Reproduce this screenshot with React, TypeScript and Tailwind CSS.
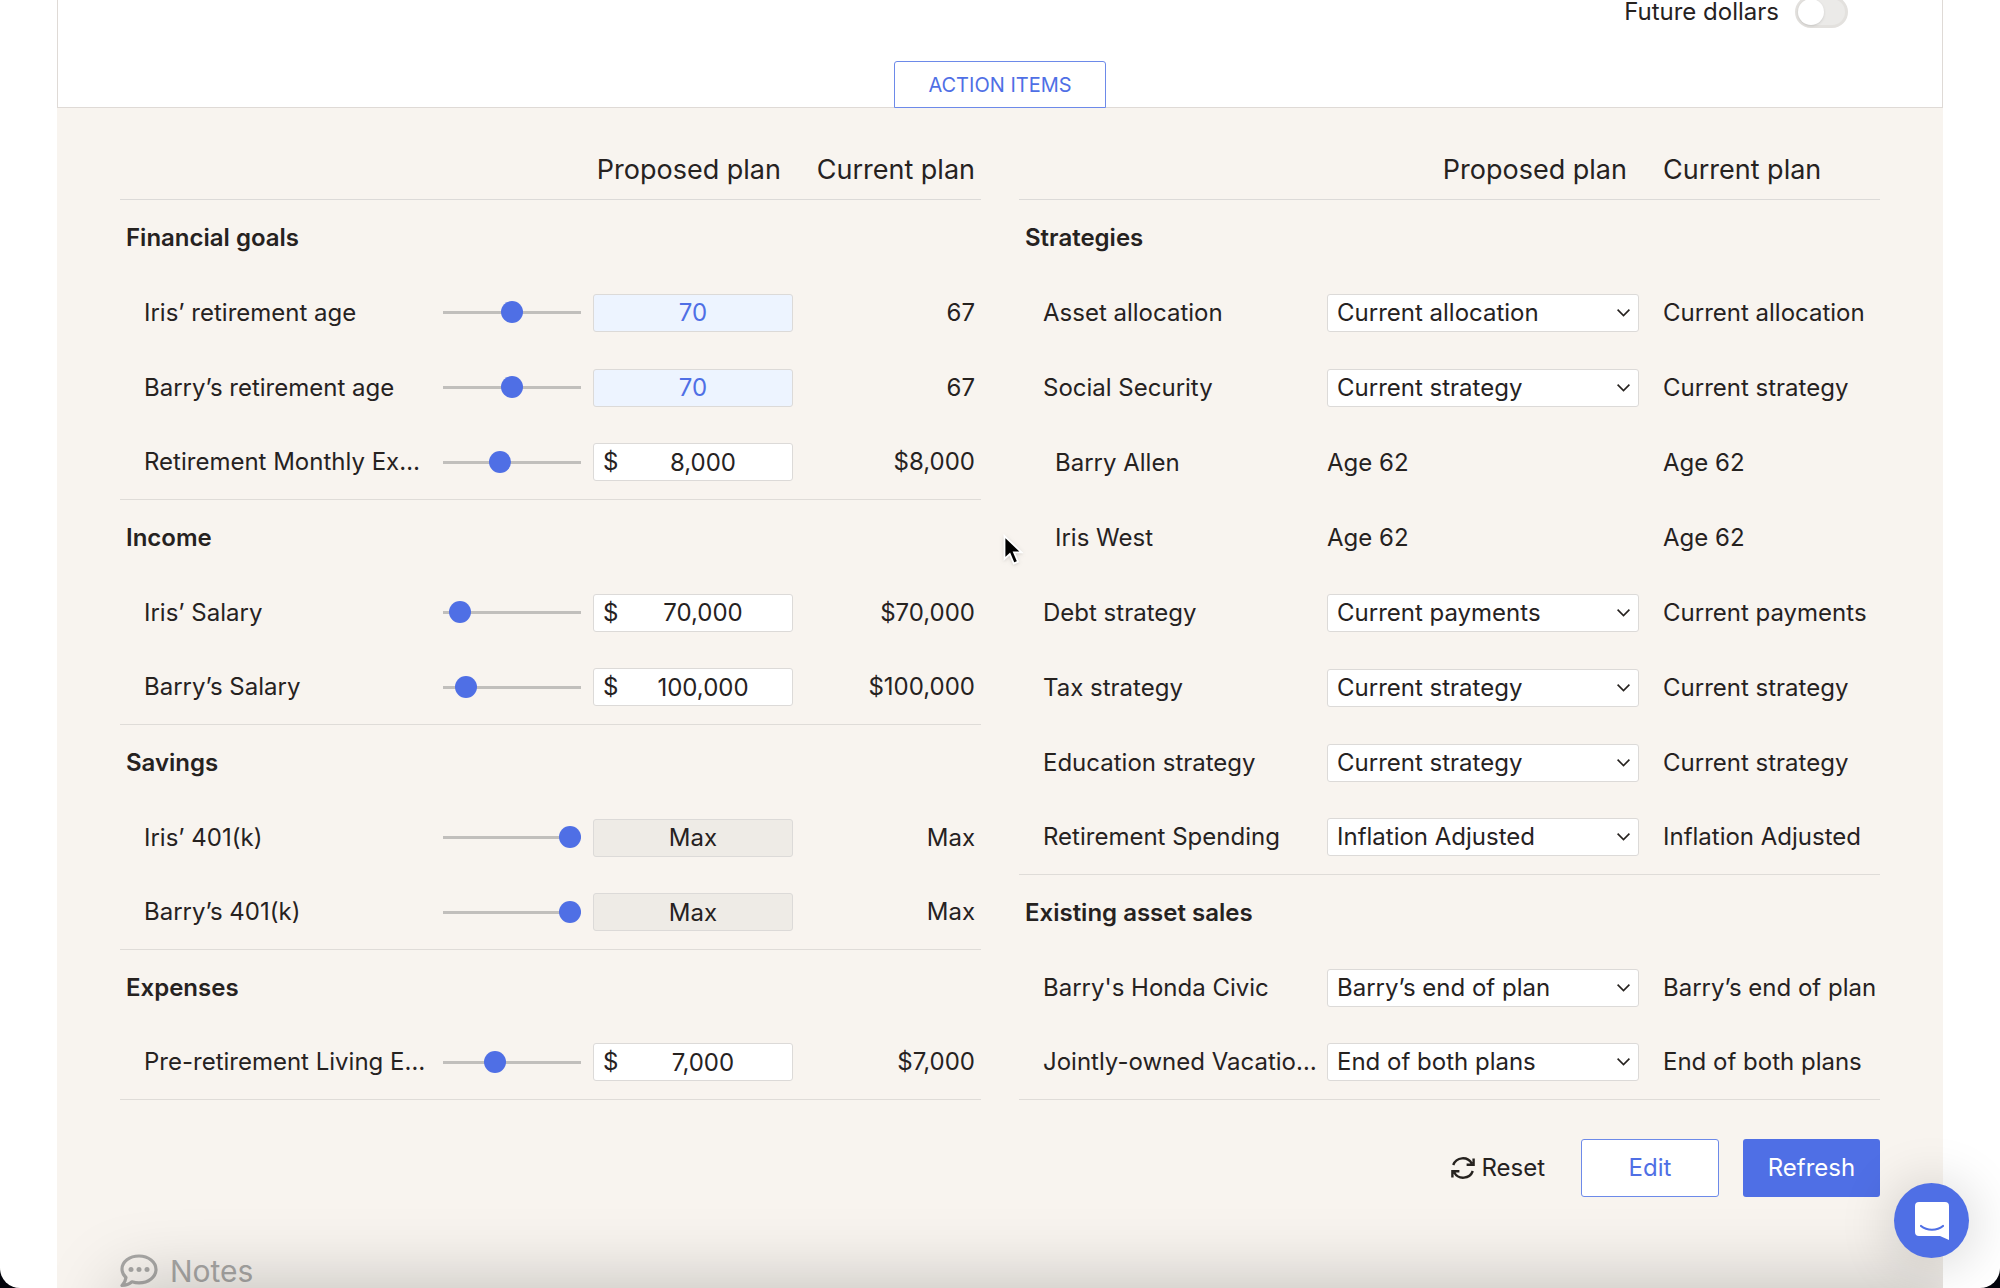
import { useState } from 'react';

type Money = { id: string; label: string; slider: number; value: string; current: string; kind: 'changed' | 'money' | 'max' };
type Strategy = { id: string; label: string; proposed: string; current: string; kind: 'select' | 'text' };

const moneySections: { title: string; rows: Money[] }[] = [
  {
    title: 'Financial goals',
    rows: [
      { id: 'iris-age', label: 'Iris’ retirement age', slider: 50, value: '70', current: '67', kind: 'changed' },
      { id: 'barry-age', label: 'Barry’s retirement age', slider: 50, value: '70', current: '67', kind: 'changed' },
      { id: 'monthly', label: 'Retirement Monthly Ex…', slider: 40, value: '8,000', current: '$8,000', kind: 'money' },
    ],
  },
  {
    title: 'Income',
    rows: [
      { id: 'iris-salary', label: 'Iris’ Salary', slider: 5, value: '70,000', current: '$70,000', kind: 'money' },
      { id: 'barry-salary', label: 'Barry’s Salary', slider: 10, value: '100,000', current: '$100,000', kind: 'money' },
    ],
  },
  {
    title: 'Savings',
    rows: [
      { id: 'iris-401k', label: 'Iris’ 401(k)', slider: 100, value: 'Max', current: 'Max', kind: 'max' },
      { id: 'barry-401k', label: 'Barry’s 401(k)', slider: 100, value: 'Max', current: 'Max', kind: 'max' },
    ],
  },
  {
    title: 'Expenses',
    rows: [
      { id: 'living', label: 'Pre-retirement Living E…', slider: 35, value: '7,000', current: '$7,000', kind: 'money' },
    ],
  },
];

const strategySections: { title: string; rows: Strategy[] }[] = [
  {
    title: 'Strategies',
    rows: [
      { id: 'allocation', label: 'Asset allocation', proposed: 'Current allocation', current: 'Current allocation', kind: 'select' },
      { id: 'social', label: 'Social Security', proposed: 'Current strategy', current: 'Current strategy', kind: 'select' },
      { id: 'barry-ss', label: 'Barry Allen', proposed: 'Age 62', current: 'Age 62', kind: 'text' },
      { id: 'iris-ss', label: 'Iris West', proposed: 'Age 62', current: 'Age 62', kind: 'text' },
      { id: 'debt', label: 'Debt strategy', proposed: 'Current payments', current: 'Current payments', kind: 'select' },
      { id: 'tax', label: 'Tax strategy', proposed: 'Current strategy', current: 'Current strategy', kind: 'select' },
      { id: 'education', label: 'Education strategy', proposed: 'Current strategy', current: 'Current strategy', kind: 'select' },
      { id: 'spending', label: 'Retirement Spending', proposed: 'Inflation Adjusted', current: 'Inflation Adjusted', kind: 'select' },
    ],
  },
  {
    title: 'Existing asset sales',
    rows: [
      { id: 'civic', label: "Barry's Honda Civic", proposed: 'Barry’s end of plan', current: 'Barry’s end of plan', kind: 'select' },
      { id: 'vacation', label: 'Jointly-owned Vacatio…', proposed: 'End of both plans', current: 'End of both plans', kind: 'select' },
    ],
  },
];

const fieldStyles = {
  changed: 'bg-[#edf4ff] text-[#4f6fe5]',
  money: 'bg-white pl-5',
  max: 'bg-[#eeebe6]',
};

function SliderInput({ id, initial }: { id: string; initial: number }) {
  const [value, setValue] = useState(initial);
  return (
    <input
      id={id}
      type="range"
      min={0}
      max={100}
      value={value}
      onChange={(e) => setValue(Number(e.target.value))}
      className="block h-[22px] w-[138px] cursor-pointer appearance-none bg-transparent [&::-webkit-slider-runnable-track]:h-[3px] [&::-webkit-slider-runnable-track]:bg-[#c1bfbc] [&::-webkit-slider-thumb]:-mt-[10px] [&::-webkit-slider-thumb]:size-[22px] [&::-webkit-slider-thumb]:appearance-none [&::-webkit-slider-thumb]:rounded-full [&::-webkit-slider-thumb]:bg-[#4f6fe5]"
    />
  );
}

function MoneyRow({ row, last }: { row: Money; last: boolean }) {
  const cell = last ? 'h-[75px] border-b border-[#dfdcd8] p-0' : 'h-[75px] p-0';
  return (
    <tr>
      <td className={cell}>
        <label htmlFor={`${row.id}-slider`} className="block truncate pl-6 pr-2">{row.label}</label>
      </td>
      <td className={cell}>
        <SliderInput id={`${row.id}-slider`} initial={row.slider} />
      </td>
      <td className={cell}>
        <div className="relative">
          {row.kind === 'money' && <span className="absolute left-[10px] top-1">$</span>}
          <input
            type="text"
            aria-label={`${row.label}, proposed`}
            defaultValue={row.value}
            className={`block h-[38px] w-full rounded-[3px] border border-[#dcdad8] text-center ${fieldStyles[row.kind]}`}
          />
        </div>
      </td>
      <td className={`${cell} text-right`}>
        <span className="pr-[6px]">{row.current}</span>
      </td>
    </tr>
  );
}

function StrategyRow({ row, last }: { row: Strategy; last: boolean }) {
  const cell = last ? 'h-[75px] border-b border-[#dfdcd8] p-0' : 'h-[75px] p-0';
  return (
    <tr>
      <td className={cell}>
        {row.kind === 'select' ? (
          <label htmlFor={row.id} className="block truncate pl-6 pr-2">{row.label}</label>
        ) : (
          <span className="block truncate pl-9 pr-2">{row.label}</span>
        )}
      </td>
      <td className={cell}>
        {row.kind === 'select' ? (
          <div className="relative">
            <select id={row.id} className="block h-[38px] w-full appearance-none rounded-[3px] border border-[#dcdad8] bg-white pl-[9px] pr-9">
              <option>{row.proposed}</option>
            </select>
            <svg className="pointer-events-none absolute right-[9px] top-[15px]" width="13" height="8" viewBox="0 0 13 8" fill="none" stroke="#26221f" strokeWidth="1.6">
              <path d="M.6.6l5.900 6L12.400.6" />
            </svg>
          </div>
        ) : (
          row.proposed
        )}
      </td>
      <td className={cell}>
        <span className="whitespace-nowrap pl-6">{row.current}</span>
      </td>
    </tr>
  );
}

function SectionTitle({ title, span }: { title: string; span: number }) {
  return (
    <tr>
      <th colSpan={span} scope="rowgroup" className="h-[75px] py-0 pl-[6px] pr-0 text-left font-semibold">{title}</th>
    </tr>
  );
}

const headCell = 'h-[92px] border-b border-[#dcdad8] px-0 pb-2 pt-10 text-[27px] font-normal whitespace-nowrap';

function GoalsTable() {
  return (
    <table className="w-full table-fixed border-separate border-spacing-0 self-start">
      <colgroup>
        <col />
        <col className="w-[150px]" />
        <col className="w-[200px]" />
        <col className="w-[188px]" />
      </colgroup>
      <thead>
        <tr>
          <td colSpan={2} className={headCell} />
          <th scope="col" className={`${headCell} text-right`}><span className="pr-3">Proposed plan</span></th>
          <th scope="col" className={`${headCell} text-right`}><span className="pr-[6px]">Current plan</span></th>
        </tr>
      </thead>
      {moneySections.map((section) => (
        <tbody key={section.title}>
          <SectionTitle title={section.title} span={4} />
          {section.rows.map((row, i) => (
            <MoneyRow key={row.id} row={row} last={i === section.rows.length - 1} />
          ))}
        </tbody>
      ))}
    </table>
  );
}

function StrategiesTable() {
  return (
    <table className="w-full table-fixed border-separate border-spacing-0 self-start">
      <colgroup>
        <col />
        <col className="w-[312px]" />
        <col className="w-[241px]" />
      </colgroup>
      <thead>
        <tr>
          <td className={headCell} />
          <th scope="col" className={`${headCell} text-right`}><span className="pr-3">Proposed plan</span></th>
          <th scope="col" className={`${headCell} text-left`}><span className="pl-6">Current plan</span></th>
        </tr>
      </thead>
      {strategySections.map((section) => (
        <tbody key={section.title}>
          <SectionTitle title={section.title} span={3} />
          {section.rows.map((row, i) => (
            <StrategyRow key={row.id} row={row} last={i === section.rows.length - 1} />
          ))}
        </tbody>
      ))}
    </table>
  );
}

function ResetIcon() {
  return (
    <svg width="24" height="24" viewBox="0 0 24 24" fill="none" stroke="currentColor" strokeWidth="2.400">
      <path d="M2.200 9A10.300 10.300 0 0 1 20.800 7.500M22.600 2.500v6.300h-7" />
      <path d="M21.800 15A10.300 10.300 0 0 1 3.200 16.500M1.400 21.500v-6.300h7" />
    </svg>
  );
}

function NotesIcon() {
  return (
    <svg width="38" height="34" viewBox="0 0 38 34" fill="none" stroke="currentColor" strokeWidth="3.200">
      <path d="M19 2C9.500 2 2 7.800 2 15c0 3.300 1.500 6.200 4 8.500-.3 3-1.800 5.600-4 8 4 0 7.500-1.500 10-3.700 2.200.7 4.500 1.100 7 1.100 9.500 0 17-6 17-13.500S28.500 2 19 2z" strokeLinejoin="round" />
      <g fill="currentColor" stroke="none">
        <circle cx="11" cy="15.500" r="2.500" />
        <circle cx="19" cy="15.500" r="2.500" />
        <circle cx="27" cy="15.500" r="2.500" />
      </g>
    </svg>
  );
}

export default function App() {
  const [future, setFuture] = useState(false);

  return (
    <div className="h-screen bg-[#03040b]">
      <div className="relative h-full overflow-hidden rounded-b-[20px] bg-white px-[57px] font-[Inter,sans-serif] text-2xl leading-[30px] text-[#26221f]">
        <div className="flex h-[108px] flex-col justify-between border border-t-0 border-[#dfdad6]">
          <div className="-mt-1 flex h-8 items-center justify-end gap-4 pr-[94px]">
            <label htmlFor="future" className="leading-6">Future dollars</label>
            <input
              id="future"
              type="checkbox"
              role="switch"
              checked={future}
              onChange={(e) => setFuture(e.target.checked)}
              className="h-8 w-[53px] cursor-pointer appearance-none rounded-full border-[3px] border-[#e3e1de] bg-[#ebeae8] before:block before:size-[26px] before:rounded-full before:bg-white before:shadow checked:bg-[#4f6fe5] checked:before:translate-x-5"
            />
          </div>
          <button className="-mb-px h-[47px] w-[212px] cursor-pointer self-center rounded-t-[3px] border border-[#6d8ae9] bg-white text-xl text-[#4f6fe5]">
            ACTION ITEMS
          </button>
        </div>

        <div className="h-full bg-[#f8f4ef] px-[63px]">
          <div className="grid grid-cols-2 gap-[38px]">
            <GoalsTable />
            <StrategiesTable />
          </div>

          <div className="mt-[39px] flex items-center justify-end gap-6">
            <button className="mr-3 flex cursor-pointer items-center gap-[6px]">
              <ResetIcon />
              Reset
            </button>
            <button className="h-[58px] w-[138px] cursor-pointer rounded-[3px] border border-[#6d8ae9] bg-white text-[#4f6fe5]">Edit</button>
            <button className="h-[58px] w-[137px] cursor-pointer rounded-[3px] bg-[#4f6fe5] text-white">Refresh</button>
          </div>

          <div className="mt-[56px] flex items-center gap-3 text-[30px] leading-9 text-[#a9a8a6]">
            <NotesIcon />
            <h2>Notes</h2>
          </div>
        </div>

        {/* Shade over the cut-off bottom of the page */}
        <div className="pointer-events-none absolute inset-x-[57px] bottom-0 h-[120px] overflow-hidden">
          <div className="mt-[124px] ml-[70px] h-20 shadow-[0_0_72px_10px_rgba(0,0,0,0.21)]" />
        </div>

        <button aria-label="Open chat" className="absolute bottom-[30px] right-[31px] flex size-[75px] cursor-pointer items-center justify-center rounded-full bg-[#4f6fe5] shadow-[0_4px_50px_8px_rgba(0,0,0,0.13)]">
          <svg width="34" height="38" viewBox="0 0 34 38">
            <path d="M4 0h26a4 4 0 0 1 4 4v34l-9-4H4a4 4 0 0 1-4-4V4a4 4 0 0 1 4-4z" fill="#fff" />
            <path d="M6 24c6 5 16 5 22 0" fill="none" stroke="#4f6fe5" strokeWidth="2.200" strokeLinecap="round" />
          </svg>
        </button>

        {/* Pointer */}
        <svg className="pointer-events-none absolute left-[1003px] top-[534px] drop-shadow" width="22" height="32" viewBox="0 0 22 32">
          <path d="M1.500 2v23l5.300-5 4 9.500 4.200-1.800-4-9.300h7.500z" fill="#000" stroke="#fff" strokeWidth="1.800" />
        </svg>
      </div>
    </div>
  );
}
